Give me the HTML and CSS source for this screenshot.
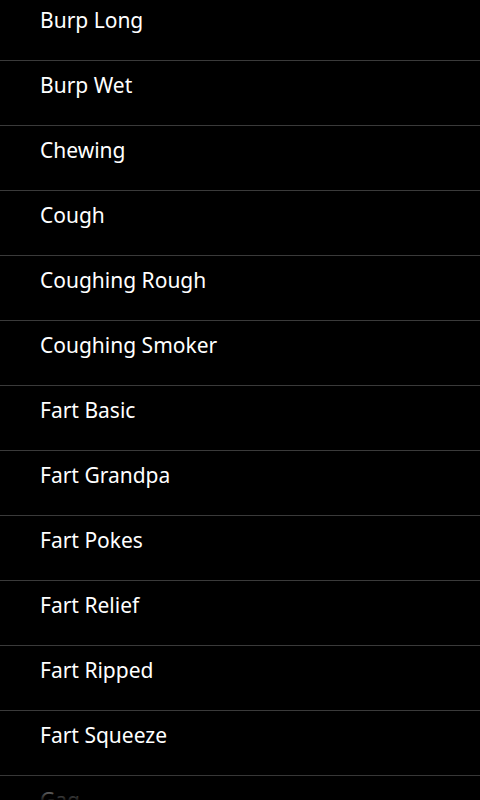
FILE: index.html
```html
<!DOCTYPE html>
<html lang="en">
<head>
  <meta charset="UTF-8" />
  <meta name="viewport" content="width=device-width, initial-scale=1" />
  <title>Sounds</title>
  <link rel="stylesheet" href="styles.css">
</head>
<body>

<ul class="sound-list">
  <li>Burp Long</li>
  <li>Burp Wet</li>
  <li>Chewing</li>
  <li>Cough</li>
  <li>Coughing Rough</li>
  <li>Coughing Smoker</li>
  <li>Fart Basic</li>
  <li>Fart Grandpa</li>
  <li>Fart Pokes</li>
  <li>Fart Relief</li>
  <li>Fart Ripped</li>
  <li>Fart Squeeze</li>
  <li>Gag</li>
</ul>
<div class="fade-bottom"></div>

</body>
</html>
```

FILE: styles.css
```css
html, body {
  background: #000;
  margin: 0;
  padding: 0;
  height: 100%;
  overflow: hidden;
}
body {
  font-family: 'Noto Sans', 'Open Sans', sans-serif;
  color: #fff;
}
.sound-list {
  list-style: none;
  margin: -4px 0 0 0;
  padding: 0;
}
.sound-list li {
  height: 65px;
  box-sizing: border-box;
  padding: 10px 0 0 40px;
  font-size: 21px;
  line-height: 28px;
  border-bottom: 1px solid #3a3a3a;
}
.fade-bottom {
  position: fixed;
  left: 0;
  right: 0;
  bottom: 0;
  height: 26px;
  background: linear-gradient(to bottom, rgba(0,0,0,0) 0%, rgba(0,0,0,0.9) 100%);
}
```
